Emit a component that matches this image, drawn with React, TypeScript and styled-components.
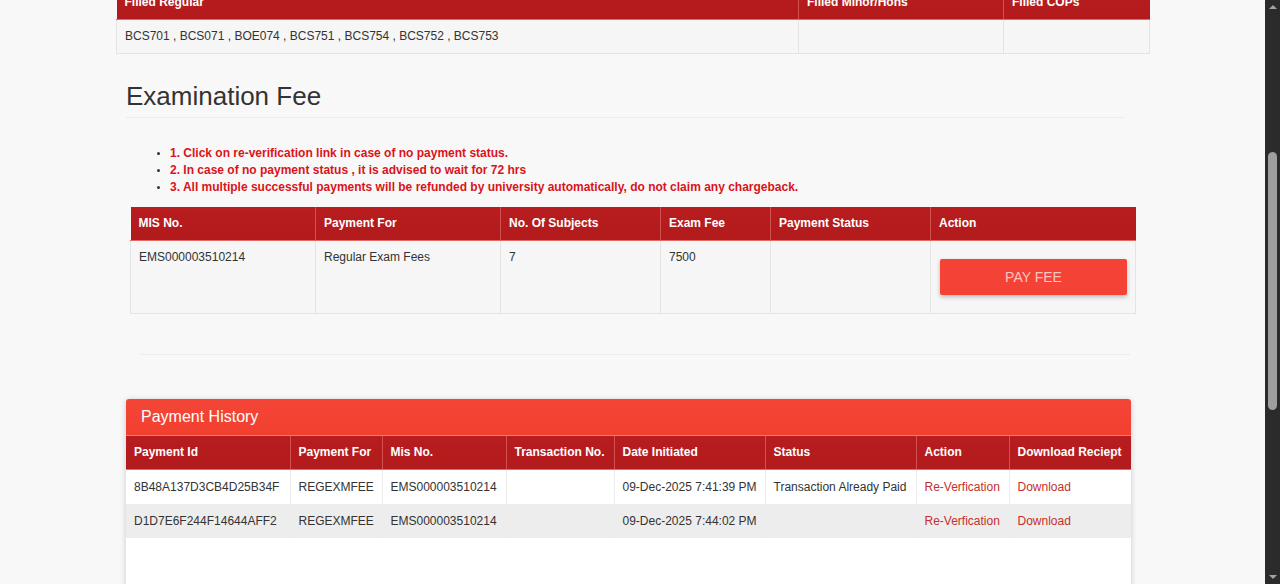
import React from 'react';
import styled, { createGlobalStyle } from 'styled-components';

const GlobalStyle = createGlobalStyle`
  html, body {
    margin: 0;
    padding: 0;
    background: #f8f8f8;
    font-family: "Liberation Sans", Arial, sans-serif;
    color: #333;
    overflow: hidden;
  }
`;

const Viewport = styled.div`
  display: flex;
  height: 584px;
  overflow: hidden;
`;

const Main = styled.main`
  flex: 1;
  overflow: hidden;
  background: #f8f8f8;
`;

const Content = styled.div`
  margin-top: -14px;
  display: flex;
  flex-direction: column;
`;

/* window scrollbar on the right */
const ScrollTrack = styled.div`
  width: 15px;
  flex: 0 0 15px;
  background: #2b2b2b;
  display: flex;
  flex-direction: column;
  align-items: center;
`;

const Arrow = styled.div<{ $down?: boolean }>`
  width: 0;
  height: 0;
  margin-top: ${(p) => (p.$down ? 'auto' : '5px')};
  margin-bottom: ${(p) => (p.$down ? '5px' : '0')};
  border-left: 4px solid transparent;
  border-right: 4px solid transparent;
  ${(p) =>
    p.$down ? 'border-top: 4px solid #a3a3a3;' : 'border-bottom: 4px solid #a3a3a3;'}
`;

const Thumb = styled.div`
  width: 9px;
  height: 258px;
  margin-top: 143px;
  border-radius: 5px;
  background: #9e9e9e;
`;

/* generic table pieces */
const Table = styled.table<{ $width: number; $left: number }>`
  width: ${(p) => p.$width}px;
  margin-left: ${(p) => p.$left}px;
  border-collapse: collapse;
  font-size: 12px;
  table-layout: fixed;
`;

const Th = styled.th<{ $w?: number }>`
  box-sizing: border-box;
  ${(p) => (p.$w ? `width: ${p.$w}px;` : '')}
  background: linear-gradient(#b81d1f, #b21a1c);
  color: #fff;
  font-weight: bold;
  text-align: left;
  padding: 8px 8px;
  height: 33px;
  line-height: 17px;
  border-left: 1px solid #d4504f;
  border-bottom: 1px solid #e46a66;
  white-space: nowrap;
  overflow: hidden;
  &:first-child {
    border-left: none;
  }
`;

const Td = styled.td`
  padding: 8px;
  line-height: 17px;
  vertical-align: top;
  border: 1px solid #e4e4e4;
  background: #f6f6f6;
  color: #333;
  white-space: nowrap;
`;

/* filled subjects */
const SubjectsTable = styled(Table)`
  ${Td} {
    height: 16px;
  }
`;

/* examination fee */
const Section = styled.section`
  margin-left: 126px;
  width: 999px;
`;

const Heading = styled.h3`
  margin: 28px 0 0;
  font-size: 26px;
  font-weight: normal;
  line-height: 29px;
  color: #333;
`;

const Rule = styled.hr<{ $left?: number; $width?: number; $top?: number }>`
  margin: ${(p) => p.$top ?? 6}px 0 0 ${(p) => p.$left ?? 0}px;
  width: ${(p) => p.$width ?? 999}px;
  border: none;
  border-top: 1px solid #ececec;
`;

const Notes = styled.ul`
  margin: 27px 0 0;
  padding-left: 44px;
  list-style: disc;
`;

const Note = styled.li`
  color: #d9141a;
  font-size: 12px;
  font-weight: bold;
  line-height: 17px;
  &::marker {
    color: #333;
    font-size: 10px;
  }
`;

const FeeTable = styled(Table)`
  margin-top: 11px;
  ${Td} {
    height: 56px;
  }
`;

const PayButton = styled.button`
  display: block;
  width: 187px;
  height: 36px;
  margin: 10px 0 0 1px;
  border: none;
  border-radius: 2px;
  background: #f44336;
  color: #fdc4bf;
  font-family: "Liberation Sans", Arial, sans-serif;
  font-size: 14px;
  text-transform: uppercase;
  box-shadow: 0 2px 4px rgba(0, 0, 0, 0.25);
  cursor: pointer;
`;

/* payment history */
const Panel = styled.div`
  margin: 44px 0 0 126px;
  width: 1005px;
  height: 200px;
  background: #fff;
  border-radius: 3px 3px 0 0;
  box-shadow: 0 1px 6px rgba(0, 0, 0, 0.18);
  overflow: hidden;
`;

const PanelHeader = styled.div`
  height: 37px;
  padding: 0 15px;
  display: flex;
  align-items: center;
  background: linear-gradient(#f34537, #f2402f);
  color: #fff;
  font-size: 16px;
  border-bottom: 1px solid #f07a6e;
  box-sizing: border-box;
`;

const HistoryTable = styled(Table)`
  margin-left: 0;
  ${Td} {
    background: #fff;
    border-top: none;
    border-bottom: none;
    border-color: #ececec;
    height: 18px;
    line-height: 18px;
  }
  ${Td}:first-child {
    border-left: none;
  }
  ${Td}:last-child {
    border-right: none;
  }
  tr:nth-child(even) ${Td} {
    background: #ededed;
  }
`;

const Link = styled.a`
  color: #c4302e;
  text-decoration: none;
`;

const history = [
  {
    id: '8B48A137D3CB4D25B34F',
    date: '09-Dec-2025 7:41:39 PM',
    status: 'Transaction Already Paid',
  },
  {
    id: 'D1D7E6F244F14644AFF2',
    date: '09-Dec-2025 7:44:02 PM',
    status: '',
  },
];

const App: React.FC = () => (
  <>
    <GlobalStyle />
    <Viewport>
      <Main>
        <Content>
          <SubjectsTable $width={1034} $left={116}>
            <thead>
              <tr>
                <Th $w={682}>Filled Regular</Th>
                <Th $w={205}>Filled Minor/Hons</Th>
                <Th>Filled COPs</Th>
              </tr>
            </thead>
            <tbody>
              <tr>
                <Td>BCS701 , BCS071 , BOE074 , BCS751 , BCS754 , BCS752 , BCS753</Td>
                <Td />
                <Td />
              </tr>
            </tbody>
          </SubjectsTable>

          <Section>
            <Heading>Examination Fee</Heading>
            <Rule />
            <Notes>
              <Note>1. Click on re-verification link in case of no payment status.</Note>
              <Note>2. In case of no payment status , it is advised to wait for 72 hrs</Note>
              <Note>
                3. All multiple successful payments will be refunded by university automatically, do
                not claim any chargeback.
              </Note>
            </Notes>
          </Section>

          <FeeTable $width={1006} $left={130}>
            <thead>
              <tr>
                <Th $w={185}>MIS No.</Th>
                <Th $w={185}>Payment For</Th>
                <Th $w={160}>No. Of Subjects</Th>
                <Th $w={110}>Exam Fee</Th>
                <Th $w={160}>Payment Status</Th>
                <Th>Action</Th>
              </tr>
            </thead>
            <tbody>
              <tr>
                <Td>EMS000003510214</Td>
                <Td>Regular Exam Fees</Td>
                <Td>7</Td>
                <Td>7500</Td>
                <Td />
                <Td>
                  <PayButton type="button">Pay Fee</PayButton>
                </Td>
              </tr>
            </tbody>
          </FeeTable>

          <Rule $left={140} $width={990} $top={40} />

          <Panel>
            <PanelHeader>Payment History</PanelHeader>
            <HistoryTable $width={1005} $left={0}>
              <thead>
                <tr>
                  <Th $w={164}>Payment Id</Th>
                  <Th $w={92}>Payment For</Th>
                  <Th $w={124}>Mis No.</Th>
                  <Th $w={108}>Transaction No.</Th>
                  <Th $w={151}>Date Initiated</Th>
                  <Th $w={151}>Status</Th>
                  <Th $w={93}>Action</Th>
                  <Th>Download Reciept</Th>
                </tr>
              </thead>
              <tbody>
                {history.map((row) => (
                  <tr key={row.id}>
                    <Td>{row.id}</Td>
                    <Td>REGEXMFEE</Td>
                    <Td>EMS000003510214</Td>
                    <Td />
                    <Td>{row.date}</Td>
                    <Td>{row.status}</Td>
                    <Td>
                      <Link href="#">Re-Verfication</Link>
                    </Td>
                    <Td>
                      <Link href="#">Download</Link>
                    </Td>
                  </tr>
                ))}
              </tbody>
            </HistoryTable>
          </Panel>
        </Content>
      </Main>
      <ScrollTrack>
        <Arrow />
        <Thumb />
        <Arrow $down />
      </ScrollTrack>
    </Viewport>
  </>
);

export default App;
